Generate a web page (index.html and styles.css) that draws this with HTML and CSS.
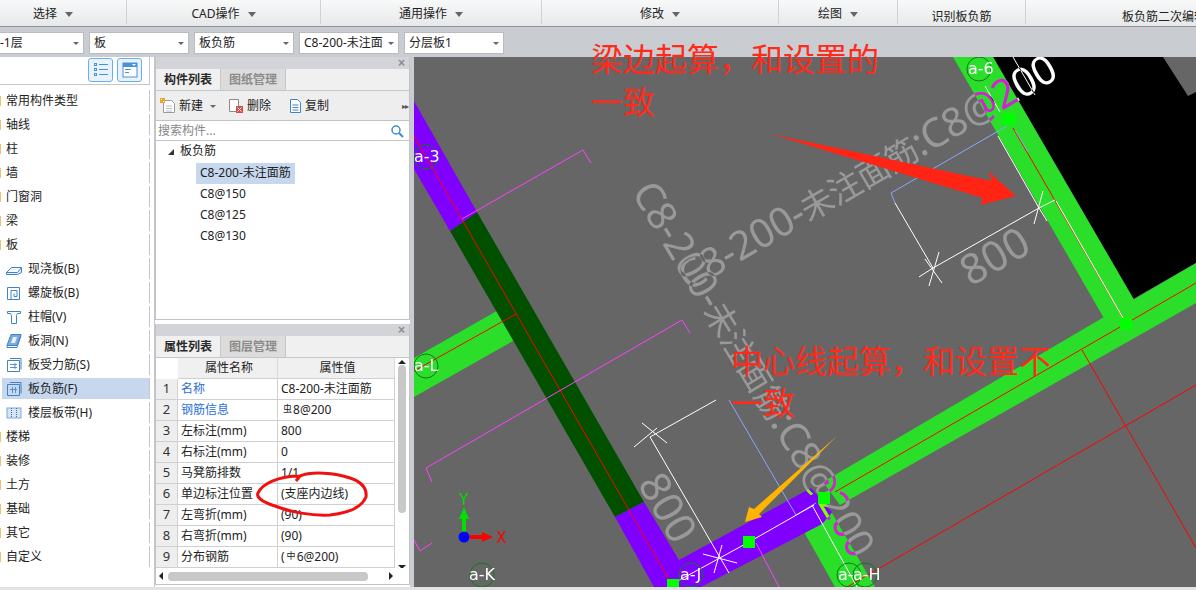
FILE: index.html
```html
<!DOCTYPE html>
<html lang="zh">
<head>
<meta charset="utf-8">
<title>板负筋</title>
<link rel="stylesheet" href="styles.css">
</head>
<body>
<div class="ribbon">
  <div class="rib rib-a">选择<i class="caret"></i></div>
  <div class="rib rib-b">CAD操作<i class="caret"></i></div>
  <div class="rib rib-c">通用操作<i class="caret"></i></div>
  <div class="rib rib-d">修改<i class="caret"></i></div>
  <div class="rib rib-e">绘图<i class="caret"></i></div>
  <div class="rib rib-f low">识别板负筋</div>
  <div class="rib rib-g low">板负筋二次编辑</div>
</div>
<div class="combos">
  <div class="combo c-floor">-1层<i class="caret small"></i></div>
  <div class="combo">板<i class="caret small"></i></div>
  <div class="combo">板负筋<i class="caret small"></i></div>
  <div class="combo">C8-200-未注面<i class="caret small"></i></div>
  <div class="combo">分层板1<i class="caret small"></i></div>
</div>
<div class="main">
  <aside class="side">
    <div class="side-head">
      <button class="vbtn"><svg width="16" height="16" viewBox="0 0 16 16"><g fill="none" stroke="#4a90d8"><rect x="1.500" y="1.500" width="2" height="2"/><rect x="1.500" y="6.500" width="2" height="2"/><rect x="1.500" y="11.500" width="2" height="2"/><path d="M6 2.500h9M6 7.500h9M6 12.500h9"/></g></svg></button>
      <button class="vbtn"><svg width="16" height="16" viewBox="0 0 16 16"><rect x="1" y="1" width="14" height="14" fill="#fff" stroke="#4a90d8"/><rect x="1" y="1" width="14" height="4" fill="#4a90d8"/><path d="M10 2h4l-2 2z" fill="#fff"/><path d="M3 7.500h6M3 10.500h4" stroke="#4a90d8"/></svg></button>
    </div>
    <div class="row top">常用构件类型</div>
    <div class="row top">轴线</div>
    <div class="row top">柱</div>
    <div class="row top">墙</div>
    <div class="row top">门窗洞</div>
    <div class="row top">梁</div>
    <div class="row top">板</div>
    <div class="row sub"><svg class="ic" viewBox="0 0 16 16"><path d="M.5 11.500l5-5h10l-4 5zM.5 11.500v2h11l4-2v-5" fill="#e6f0fa" stroke="#3f83c8"/></svg>现浇板(B)</div>
    <div class="row sub"><svg class="ic" viewBox="0 0 16 16"><path d="M1.500 2.500h12v12h-12zM5 14V5.500h6v6H8V8.500" fill="none" stroke="#3f83c8"/></svg>螺旋板(B)</div>
    <div class="row sub"><svg class="ic" viewBox="0 0 16 16"><path d="M1.500 2.500h13v2h-3l-1 2v8h-5v-8l-1-2h-3z" fill="none" stroke="#3f83c8"/></svg>柱帽(V)</div>
    <div class="row sub"><svg class="ic" viewBox="0 0 16 16"><path d="M5 1.500h10l-4 11H1z" fill="#7fa9d6" stroke="#3f83c8"/><path d="M7 4h4l-2 6H5z" fill="#e6f0fa"/><path d="M1 12.500v2h10l4-12" fill="none" stroke="#3f83c8"/></svg>板洞(N)</div>
    <div class="row sub"><svg class="ic" viewBox="0 0 16 16"><path d="M1.500 3.500h12v11h-12zM4 1.500h11v11" fill="none" stroke="#3f83c8"/><path d="M4 7.500h7M4 10.500h7M9 6v6" fill="none" stroke="#5f8ec4"/></svg>板受力筋(S)</div>
    <div class="row sub sel"><svg class="ic" viewBox="0 0 16 16"><path d="M1.500 3.500h12v11h-12zM4 1.500h11v11" fill="none" stroke="#3f83c8"/><path d="M4 8.500h7M6.500 6v6M9.500 6v6" fill="none" stroke="#5f8ec4"/></svg>板负筋(F)</div>
    <div class="row sub"><svg class="ic" viewBox="0 0 16 16"><rect x="1" y="3" width="14" height="10" fill="#d6e3f2" stroke="#7fa9d6"/><path d="M5.500 3v10M10.500 3v10" stroke="#3f6fa8" stroke-dasharray="1 1"/></svg>楼层板带(H)</div>
    <div class="row top">楼梯</div>
    <div class="row top">装修</div>
    <div class="row top">土方</div>
    <div class="row top">基础</div>
    <div class="row top">其它</div>
    <div class="row top">自定义</div>
  </aside>
  <div class="panels">
    <section class="panel p-list">
      <div class="p-head"><span class="x">×</span></div>
      <div class="tabs"><span class="tab on">构件列表</span><span class="tab">图纸管理</span></div>
      <div class="tools">
        <span class="tool t-new"><svg class="ic" viewBox="0 0 16 16"><path d="M3.500 2.500h8l3 3v9h-11z" fill="#fff" stroke="#9a9a9a"/><path d="M6 8h6M6 10.500h6M6 13h6" stroke="#bcbcbc"/><rect x="0" y="0" width="5" height="5" fill="#f2a030"/><path d="M1 1h1v1H1zM3 3h1v1H3z" fill="#fff"/></svg>新建<i class="caret small"></i></span>
        <span class="tool t-del"><svg class="ic" viewBox="0 0 16 16"><path d="M1.500 1.500h9v12h-9z" fill="#fff" stroke="#8a8a8a"/><rect x="8" y="8" width="7" height="7" fill="#d84848"/><path d="M9.500 9.500l4 4M13.500 9.500l-4 4" stroke="#fff"/></svg>删除</span>
        <span class="tool t-cop"><svg class="ic" viewBox="0 0 16 16"><path d="M3.500 1.500h7l3 3v10h-10z" fill="#fff" stroke="#3f83c8"/><path d="M5.500 7h6M5.500 9.500h6M5.500 12h6" stroke="#3f83c8"/></svg>复制</span>
        <span class="more">▸▸</span>
      </div>
      <div class="search"><span>搜索构件...</span><svg width="14" height="14" viewBox="0 0 14 14"><circle cx="6" cy="6" r="4" fill="none" stroke="#3a8fc8" stroke-width="1.500"/><path d="M9 9l4 4" stroke="#3a8fc8" stroke-width="2"/></svg></div>
      <div class="list">
        <div class="li root"><i class="tri"></i>板负筋</div>
        <div class="li leaf"><span class="picked">C8-200-未注面筋</span></div>
        <div class="li leaf"><span>C8@150</span></div>
        <div class="li leaf"><span>C8@125</span></div>
        <div class="li leaf"><span>C8@130</span></div>
      </div>
    </section>
    <section class="panel p-prop">
      <div class="p-head"><span class="x">×</span></div>
      <div class="tabs"><span class="tab on">属性列表</span><span class="tab">图层管理</span></div>
      <div class="prop-body">
        <div class="grid">
          <div class="cell hd n"></div><div class="cell hd c">属性名称</div><div class="cell hd c">属性值</div>
          <div class="cell n">1</div><div class="cell link">名称</div><div class="cell">C8-200-未注面筋</div>
          <div class="cell n">2</div><div class="cell link">钢筋信息</div><div class="cell"><sup class="bar">虫</sup>8@200</div>
          <div class="cell n">3</div><div class="cell">左标注(mm)</div><div class="cell">800</div>
          <div class="cell n">4</div><div class="cell">右标注(mm)</div><div class="cell">0</div>
          <div class="cell n">5</div><div class="cell">马凳筋排数</div><div class="cell">1/1</div>
          <div class="cell n">6</div><div class="cell">单边标注位置</div><div class="cell">(支座内边线)</div>
          <div class="cell n">7</div><div class="cell">左弯折(mm)</div><div class="cell">(90)</div>
          <div class="cell n">8</div><div class="cell">右弯折(mm)</div><div class="cell">(90)</div>
          <div class="cell n">9</div><div class="cell">分布钢筋</div><div class="cell">(<sup class="bar">中</sup>6@200)</div>
        </div>
        <div class="vscroll"><i class="up"></i><b></b><i class="down"></i></div>
      </div>
      <div class="hscroll"><i class="left"></i><b></b><i class="right"></i></div>
    </section>
  </div>
  <div class="splitter"></div>
  <svg class="canvas" viewBox="414 57 782 530" width="782" height="530">
    <polygon class="black" points="993,57 1163,57 1188,96 1196,92 1196,263 1133,299"/>
    <g class="beam-green">
      <polygon points="953,57 993,57 1136,303 1105,320"/>
      <polygon points="823,482 1196,263 1196,303 840,505"/>
      <polygon points="803,530 822,524 832,513 875,587 835,587"/>
      <polygon points="414,358 511,303 527,333 414,397"/>
    </g>
    <polygon class="beam-dark" points="477,212 644,502 615,517 450,231"/>
    <g class="beam-purple">
      <polygon points="414,101 477,212 450,231 414,169"/>
      <polygon points="615,517 644,502 679,560 811,488 832,512 822,524 701,587 654,587"/>
    </g>
    <g class="red">
      <path d="M414 136L672 585M414 371L516 314M835 492L1196 283M1013 128L1123 318M1082 350L1196 548M847 587L1196 385"/>
    </g>
    <g class="mag">
      <path d="M462 219L583 150L591 163M426 468L682 320L690 333M426 468L432 482M414 540L420 551L432 543M756 543L779 587"/>
    </g>
    <g class="blue">
      <path d="M1007 126L891 193L895 203M729 400L796 515L816 503M1015 130L1028 152"/>
    </g>
    <g class="white">
      <path d="M998 136L1039 208M1056 201L1123 318M1013 57L1035 95M985 86L1000 112"/>
      <path d="M895 203L933 268L1039 208L1055 200M919 277L933 268M929 286L939 252M925 259L942 283M1034 224L1043 191M1039 208L1047 221"/>
      <path d="M716 400L650 437L729 573M634 447L657 428M642 423L667 443M703 554L737 563M722 545L714 573"/>
      <path d="M672 584L707 565L749 542L814 505M812 505L857 587"/>
    </g>
    <g class="xor">
      <text x="688" y="292" transform="rotate(-30 688 292)" textLength="430">C8-200-<tspan class="cjk">未注面筋</tspan>:C8@200</text>
      <text x="631" y="192" transform="rotate(59 631 192)" textLength="430">C8-200-<tspan class="cjk">未注面筋</tspan>:C8@200</text>
      <text class="mid" x="1002" y="269" transform="rotate(-30 1002 269)">800</text>
      <text class="mid" x="655" y="515" transform="rotate(60 655 515)">800</text>
    </g>
    <g class="sq">
      <rect x="1003" y="113" width="12" height="12"/>
      <rect x="1120" y="318" width="12" height="12"/>
      <rect x="743" y="536" width="12" height="12"/>
      <rect x="818" y="492" width="12" height="12"/>
      <rect x="667" y="579" width="12" height="8"/>
    </g>
    <g class="axis">
      <circle cx="426" cy="157" r="12"/><circle cx="426" cy="366" r="12"/><circle cx="979" cy="69" r="12"/>
      <circle cx="482" cy="575" r="12"/><circle cx="691" cy="575" r="12"/><circle cx="849" cy="575" r="12"/><circle cx="865" cy="575" r="12"/>
    </g>
    <g class="axt">
      <text x="414" y="162">a-3</text>
      <text x="414" y="371">a-L</text>
      <text x="968" y="74">a-6</text>
      <text x="469" y="580">a-K</text>
      <text x="680" y="580">a-J</text>
      <text x="838" y="580">a-</text>
      <text x="853" y="580">a-H</text>
    </g>
    <g class="gizmo">
      <path class="gy" d="M464 535V512"/><polygon class="gyf" points="464,507 459,519 469,519"/>
      <path class="gx" d="M470 537H486"/><polygon class="gxf" points="493,537 482,532 482,542"/>
      <circle cx="464" cy="537" r="5.500"/>
      <text class="gyt" x="459" y="505">Y</text><text class="gxt" x="496" y="543">X</text>
    </g>
    <polygon class="ar-red" points="771,134 992,181 988,171 1016,196 980,205 983,198"/>
    <polygon class="ar-org" points="837,436 754,509 749,507 745,522 762,517 759,514"/>
  </svg>
</div>
<div class="foot"></div>
<svg class="notes" viewBox="580 30 490 400" width="490" height="400">
  <text x="591" y="71">梁边起算，和设置的</text>
  <text x="591" y="114">一致</text>
  <text x="731" y="373">中心线起算，和设置不</text>
  <text x="731" y="415">一致</text>
</svg>
<svg class="scribble" viewBox="250 465 125 60" width="125" height="60"><path d="M300 476C312 471 335 473 350 478C362 482 367 489 366 497C362 507 348 513 330 515C312 516 290 512 275 506C262 502 256 497 258 493C262 484 278 476 300 476L296 481" fill="none" stroke="#f01010" stroke-width="3"/></svg>
</body>
</html>
```
FILE: styles.css
```css
* { box-sizing: border-box; }
html, body { margin: 0; padding: 0; }
body {
  position: relative;
  width: 1196px;
  height: 590px;
  overflow: hidden;
  background: #e3e3e3;
  color: #222;
  font: 12px/1.2 "Noto Sans", "Noto Sans CJK SC", sans-serif;
}
.caret {
  display: inline-block;
  width: 0; height: 0;
  margin-left: 8px;
  vertical-align: middle;
  border-left: 4px solid transparent;
  border-right: 4px solid transparent;
  border-top: 5px solid #666;
}
.caret.small { border-left-width: 3px; border-right-width: 3px; border-top-width: 3px; margin-left: 0; }

.ribbon {
  display: flex;
  height: 27px;
  background: linear-gradient(#f8f9f9, #e6e8ea);
  border-bottom: 1px solid #8f9296;
}
.rib {
  display: flex;
  flex: none;
  align-items: center;
  justify-content: center;
  height: 24px;
  padding-top: 4px;
  border-right: 1px solid #d0d3d6;
  white-space: nowrap;
}
.rib.low { padding-top: 10px; }
.rib-a { width: 147px; margin-left: -20px; }
.rib-b { width: 194px; }
.rib-c { width: 221px; }
.rib-d { width: 237px; }
.rib-e { width: 119px; }
.rib-f { width: 128px; }
.rib-g { flex: 1; justify-content: flex-start; padding-left: 96px; border-right: 0; }

.combos {
  display: flex;
  gap: 5px;
  height: 30px;
  padding: 5px 0 3px 0;
  background: #c9ccd1;
}
.combo {
  display: flex;
  flex: none;
  align-items: center;
  justify-content: space-between;
  width: 100px;
  padding: 0 4px;
  background: #fff;
  border: 1px solid #b8bbbf;
  white-space: nowrap;
}
.c-floor { width: 85px; margin-left: -1px; padding-left: 0; }

.main { display: flex; height: 530px; background: #c9ccd1; }

.side { width: 155px; background: #fff; border-right: 1px solid #c4c6c9; }
.side-head {
  display: flex;
  justify-content: flex-end;
  gap: 4px;
  height: 28px;
  padding: 1px 7px 0 0;
  margin-right: 4px;
  border-right: 1px solid #c4c6c9;
  border-bottom: 1px solid #c4c6c9;
  margin-bottom: 5px;
}
.vbtn {
  display: flex;
  align-items: center;
  justify-content: center;
  width: 25px;
  height: 24px;
  padding: 0;
  background: #e9f3fd;
  border: 1px solid #6aaef0;
  border-radius: 3px;
}
.row {
  display: flex;
  align-items: center;
  height: 21px;
  padding-top: 1px;
  margin: 0 4px 3px 0;
  border-right: 1px solid #c4c6c9;
  white-space: nowrap;
}
.row.top { padding-left: 6px; background: linear-gradient(90deg, #f0c070 1.500px, transparent 1.500px) no-repeat 0 6px / 2px 10px; }
.row.sub { padding-left: 6px; }
.row.sel { margin-left: 2px; padding-left: 4px; background: #c6d7ee; }
.ic { width: 16px; height: 16px; margin-right: 6px; flex: none; }

.panels {
  display: flex;
  flex: none;
  flex-direction: column;
  gap: 4px;
  width: 255px;
  padding-bottom: 2px;
  background: #fff;
}
.panel {
  display: flex;
  flex-direction: column;
  border: 1px solid #c0c3c7;
  border-top: 0;
  background: #fff;
}
.p-list { flex: none; height: 263px; }
.p-prop { flex: 1; min-height: 0; }
.p-head {
  display: flex;
  flex: none;
  justify-content: flex-end;
  align-items: center;
  height: 12px;
  padding-right: 4px;
  background: #d2d4d8;
}
.x { font: bold 12px/12px "Liberation Sans", sans-serif; color: #8a8c90; }
.tabs {
  display: flex;
  flex: none;
  height: 22px;
  background: #f0f0f0;
  border-bottom: 1px solid #c4c6c9;
}
.tab {
  display: flex;
  align-items: center;
  justify-content: center;
  width: 65px;
  padding-top: 1px;
  background: #dcdcdc;
  color: #8c8c8c;
  font-weight: 700;
  border-right: 1px solid #c8c8c8;
}
.tab.on { background: #f0f0f0; color: #2a2a2a; }
.tools {
  display: flex;
  flex: none;
  align-items: center;
  height: 30px;
  padding-top: 1px;
  background: #eee;
  border-bottom: 1px solid #c0c3c7;
}
.tool { display: flex; align-items: center; white-space: nowrap; }
.tool .ic { margin-right: 3px; }
.t-new { flex: none; margin-left: 4px; width: 68px; }
.t-new .caret { margin-left: 7px; }
.t-del { flex: none; width: 59px; }
.t-cop { flex: 1; }
.t-cop .ic { margin-right: 2px; }
.more { font-size: 8px; color: #555; margin-right: 1px; letter-spacing: -1px; }
.search {
  display: flex;
  flex: none;
  align-items: center;
  justify-content: space-between;
  height: 20px;
  padding: 1px 5px 0 2px;
  color: #888;
  border-bottom: 1px solid #c0c3c7;
}
.list { flex: 1; }
.li { display: flex; align-items: center; height: 21px; padding-top: 1px; white-space: nowrap; }
.root { padding-left: 24px; padding-top: 0; }
.leaf { padding-left: 40px; }
.leaf span { padding: 2px 4px; }
.leaf .picked { display: flex; align-items: center; height: 21px; background: #c6d7ee; }
.tri {
  width: 0; height: 0;
  margin-right: 6px;
  margin-left: -12px;
  border-left: 6px solid transparent;
  border-bottom: 6px solid #333;
}

.prop-body { display: flex; flex: 1; min-height: 0; }
.grid {
  display: grid;
  flex: none;
  grid-template-columns: 22px 100px 117px;
  grid-auto-rows: 21px;
  align-content: start;
  height: 212px;
  overflow: hidden;
}
.cell {
  display: flex;
  align-items: center;
  padding: 1px 0 0 3px;
  white-space: nowrap;
  border-right: 1px solid #d0d0d0;
  border-bottom: 1px solid #d0d0d0;
}
.cell.n { justify-content: center; padding: 0; background: #eee; font-size: 13px; color: #333; }
.cell.hd { background: #f0f0f0; border-right: 1px solid #d8d8d8; }
.cell.hd.n { background: #fff; border: 0; }
.cell.c { justify-content: center; }
.cell.link { color: #2a6fd8; }
.bar { font-size: 9px; line-height: 1; position: relative; top: -2px; vertical-align: baseline; margin: 0 1px 0 2px; }
.vscroll {
  display: flex;
  flex: 1;
  flex-direction: column;
  align-items: center;
  justify-content: space-between;
  height: 212px;
  padding: 2px 0 1px;
}
.vscroll b { width: 8px; height: 148px; margin-top: -52px; background: #c8c8c8; border-radius: 4px; }
.up { border-left: 4px solid transparent; border-right: 4px solid transparent; border-bottom: 4px solid #222; }
.down { border-left: 4px solid transparent; border-right: 4px solid transparent; border-top: 4px solid #222; }
.hscroll {
  display: flex;
  flex: none;
  align-items: center;
  height: 16px;
  padding: 0 16px 0 3px;
  background: #fff;
}
.hscroll b { width: 200px; height: 9px; margin: 0 auto 0 5px; background: #c8c8c8; border-radius: 4px; }
.left { border-top: 4px solid transparent; border-bottom: 4px solid transparent; border-right: 4px solid #222; }
.right { border-top: 4px solid transparent; border-bottom: 4px solid transparent; border-left: 4px solid #222; }

.splitter { flex: none; width: 4px; background: #c9ccd1; }
.canvas { display: block; flex: none; width: 782px; height: 530px; background: #666; isolation: isolate; }
.black { fill: #000; }
.beam-green polygon { fill: #2ade2a; }
.beam-dark { fill: #005000; }
.beam-purple polygon { fill: #8000ff; }
.red path { fill: none; stroke: #ff0000; stroke-width: 1; }
.mag path { fill: none; stroke: #ff40ff; stroke-width: 1; }
.blue path { fill: none; stroke: #8aa8ff; stroke-width: 1; }
.white path { fill: none; stroke: #fff; stroke-width: 1; }
.xor text {
  fill: #fff;
  mix-blend-mode: difference;
  font: 40px "Noto Sans", "Noto Sans CJK SC", sans-serif;
}
.xor .mid { text-anchor: middle; font-size: 42px; }
.xor .cjk { font-size: 33px; }
.sq rect { fill: #00ff00; }
.axis circle { fill: none; stroke: #0a7a1a; stroke-width: 1; }
.axt text { fill: #fff; font: 16px "DejaVu Sans", sans-serif; }
.gizmo circle { fill: #0000ff; }
.gy { stroke: #00e000; stroke-width: 4; }
.gyf { fill: #00e000; }
.gx { stroke: #ff0000; stroke-width: 4; }
.gxf { fill: #ff0000; }
.gyt { fill: #00e000; font: 15px "DejaVu Sans", sans-serif; }
.gxt { fill: #ff0000; font: 15px "DejaVu Sans", sans-serif; }
.ar-red { fill: #ff2414; }
.ar-org { fill: #ffb400; }

.foot { height: 3px; background: #e3e3e3; }
.notes { position: absolute; left: 580px; top: 30px; pointer-events: none; }
.notes text { fill: #ff2a1a; font: 32px "Noto Sans CJK SC", sans-serif; }
.scribble { position: absolute; left: 250px; top: 465px; pointer-events: none; }
```
